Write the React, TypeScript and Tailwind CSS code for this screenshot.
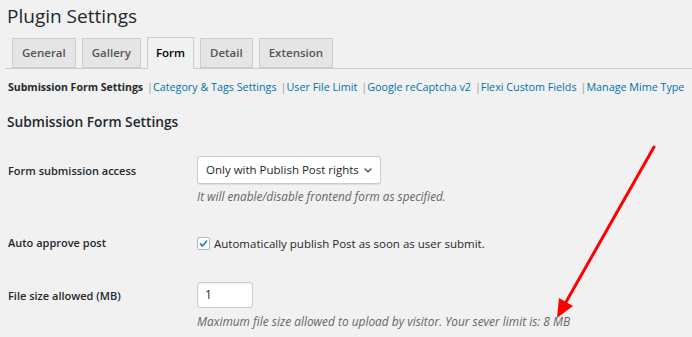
import React from "react";

const tabs = ["General", "Gallery", "Form", "Detail", "Extension"];
const links = [
  "Category & Tags Settings",
  "User File Limit",
  "Google reCaptcha v2",
  "Flexi Custom Fields",
  "Manage Mime Type",
];

export default function App() {
  return (
    <div
      className="relative w-[692px] h-[337px] overflow-hidden bg-[#f1f1f1] text-[#23282d]"
      style={{ fontFamily: '"Open Sans", "Noto Sans", sans-serif' }}
    >
      <h1 className="pl-[7px] pt-[2px] text-[19px] leading-[28px] font-normal text-[#23282d]">
        Plugin Settings
      </h1>

      {/* Tabs */}
      <div className="mt-[7px] ml-[5px] flex items-end gap-[6px] border-b border-[#ccc] pl-[7px] h-[32px]">
        {tabs.map((t) => (
          <div
            key={t}
            className={
              t === "Form"
                ? "h-[32px] -mb-px flex items-center px-[8px] border border-[#ccc] border-b-[#f1f1f1] bg-[#f1f1f1] text-[11.5px] font-semibold text-black"
                : "h-[30px] flex items-center px-[9px] border border-[#ccc] bg-[#e5e5e5] text-[11.5px] font-semibold text-[#555]"
            }
          >
            {t}
          </div>
        ))}
      </div>

      {/* Sub navigation */}
      <div className="mt-[11px] pl-[8px] flex items-center text-[10.75px] leading-[14px] whitespace-nowrap">
        <span className="font-bold text-[10.5px] text-[#23282d] mr-[4px]">Submission Form Settings</span>
        {links.map((l) => (
          <span key={l} className="flex items-center">
            <span className="text-[#999]">|</span>
            <span className="text-[#0073aa] mr-[4px]">{l}</span>
          </span>
        ))}
      </div>

      <h2 className="mt-[18px] pl-[7px] text-[13.75px] leading-[20px] font-semibold text-[#23282d]">
        Submission Form Settings
      </h2>

      {/* Rows */}
      <div className="mt-[24px] pl-[8px] flex flex-col text-[11px]">
        <div className="flex">
          <div className="w-[189px] pt-[7px] font-semibold">Form submission access</div>
          <div className="flex flex-col">
            <div className="w-[184px] h-[28px] flex items-center justify-between pl-[8px] pr-[7px] bg-white border border-[#ccc] rounded-[3px] shadow-[0_1px_1px_rgba(0,0,0,0.08)] text-[11.5px] whitespace-nowrap">
              <span>Only with Publish Post rights</span>
              <svg width="10" height="10" viewBox="0 0 10 10">
                <path d="M1.5 3.5 L5 6.8 L8.5 3.5" fill="none" stroke="#555" strokeWidth="1.4" />
              </svg>
            </div>
            <div className="mt-[4px] italic text-[#666] text-[11.75px]">
              It will enable/disable frontend form as specified.
            </div>
          </div>
        </div>

        <div className="flex mt-[29px] items-center">
          <div className="w-[189px] font-semibold">Auto approve post</div>
          <div className="flex items-center gap-[4px] text-[11.5px]">
            <div className="w-[13px] h-[13px] bg-white border border-[#b4b9be] rounded-[2px] flex items-center justify-center">
              <svg width="11" height="11" viewBox="0 0 11 11">
                <path d="M2 5.5 L4.5 8 L9 2.5" fill="none" stroke="#1e8cbe" strokeWidth="1.8" />
              </svg>
            </div>
            <span>Automatically publish Post as soon as user submit.</span>
          </div>
        </div>

        <div className="flex mt-[30px]">
          <div className="w-[189px] pt-[6px] font-semibold">File size allowed (MB)</div>
          <div className="flex flex-col">
            <div className="w-[56px] h-[26px] flex items-center px-[7px] bg-white border border-[#ccc] rounded-[3px] shadow-[inset_0_1px_2px_rgba(0,0,0,0.07)] text-[12px]">
              1
            </div>
            <div className="mt-[5px] italic text-[#666] text-[11.9px] whitespace-nowrap">
              Maximum file size allowed to upload by visitor. Your sever limit is: 8 MB
            </div>
          </div>
        </div>
      </div>

      {/* Red arrow annotation */}
      <svg className="absolute left-0 top-0 pointer-events-none" width="692" height="337">
        <line x1="654" y1="147" x2="566" y2="302" stroke="#ff0000" strokeWidth="3" strokeLinecap="round" />
        <polygon points="557,318 559,298 573,306" fill="#ff0000" />
      </svg>
    </div>
  );
}
